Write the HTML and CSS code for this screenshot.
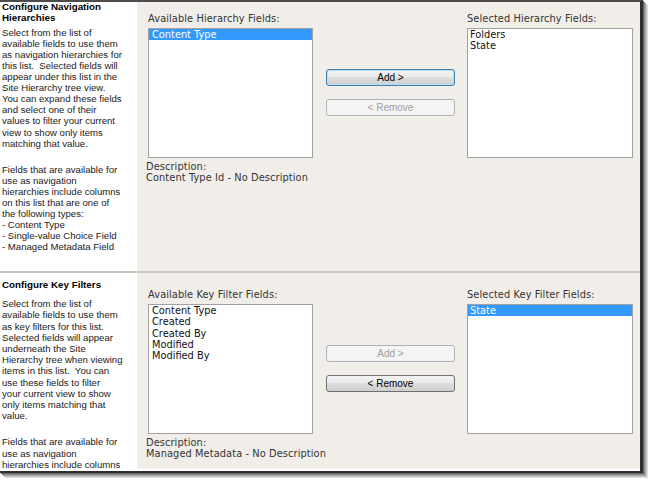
FILE: index.html
```html
<!DOCTYPE html>
<html lang="en">
<head>
  <meta charset="UTF-8">
  <title>Site Hierarchy Settings</title>
  <link rel="stylesheet" href="styles.css">
</head>
<body>
<div class="frame">
  <div class="page">
    <div class="row row-nav">
      <div class="info">
        <h3>Configure Navigation<br>Hierarchies</h3>
        <p>Select from the list of<br>available fields to use them<br>as navigation hierarchies for<br>this list.&nbsp; Selected fields will<br>appear under this list in the<br>Site Hierarchy tree view.<br>You can expand these fields<br>and select one of their<br>values to filter your current<br>view to show only items<br>matching that value.</p>
        <p>Fields that are available for<br>use as navigation<br>hierarchies include columns<br>on this list that are one of<br>the following types:<br>- Content Type<br>- Single-value Choice Field<br>- Managed Metadata Field</p>
      </div>
      <div class="panel">
        <div class="picker">
          <div class="col">
            <div class="label">Available Hierarchy Fields:</div>
            <ul class="list">
              <li class="is-selected">Content Type</li>
            </ul>
            <div class="desc">Description:<br>Content Type Id - No Description</div>
          </div>
          <div class="buttons">
            <button class="btn is-default">Add &gt;</button>
            <button class="btn" disabled>&lt; Remove</button>
          </div>
          <div class="col col-right">
            <div class="label">Selected Hierarchy Fields:</div>
            <ul class="list">
              <li>Folders</li>
              <li>State</li>
            </ul>
          </div>
        </div>
      </div>
    </div>
    <div class="row row-keys">
      <div class="info">
        <h3>Configure Key Filters</h3>
        <p>Select from the list of<br>available fields to use them<br>as key filters for this list.<br>Selected fields will appear<br>underneath the Site<br>Hierarchy tree when viewing<br>items in this list.&nbsp; You can<br>use these fields to filter<br>your current view to show<br>only items matching that<br>value.</p>
        <p>Fields that are available for<br>use as navigation<br>hierarchies include columns<br>on this list that are one of</p>
      </div>
      <div class="panel">
        <div class="picker">
          <div class="col">
            <div class="label">Available Key Filter Fields:</div>
            <ul class="list">
              <li>Content Type</li>
              <li>Created</li>
              <li>Created By</li>
              <li>Modified</li>
              <li>Modified By</li>
            </ul>
            <div class="desc">Description:<br>Managed Metadata - No Description</div>
          </div>
          <div class="buttons">
            <button class="btn" disabled>Add &gt;</button>
            <button class="btn">&lt; Remove</button>
          </div>
          <div class="col col-right">
            <div class="label">Selected Key Filter Fields:</div>
            <ul class="list">
              <li class="is-selected">State</li>
            </ul>
          </div>
        </div>
      </div>
    </div>
  </div>
</div>
</body>
</html>
```

FILE: styles.css
```css
*{ margin: 0; padding: 0; box-sizing: border-box;}
body{ background: #fff; color: #111; font-family: "Liberation Sans",Arial,sans-serif;}
ul,li{ list-style: none;}

.frame{ width: 648px; height: 480px; overflow: hidden;}
.page{ width: 643px; height: 473px; overflow: hidden; border-top: 2px solid #4c4c4c; border-right: 3px solid #2e2e2e; border-bottom: 2px solid #2e2e2e;
  box-shadow: 1px 1px 0 #666, 2px 2px 0 #8a8a8a, 3px 3px 0 #a8a8a8, 4px 4px 0 #c4c4c4, 5px 5px 0 #dcdcdc;}

.row{ display: flex;}
.row-nav{ height: 269px;}
.row-keys{ height: 198px; border-top: 2px solid #c9c7c3;}

.info{ width: 137px; padding-left: 2px; background: #fff; font-size: 9.6px; line-height: 11.1px; white-space: nowrap; overflow: hidden; color: #1a1a1a;}
.info h3{ font-size: 9.8px; font-weight: bold; line-height: 11.1px; color: #000;}
.info p{ margin-bottom: 15px;}
.row-nav .info h3{ margin-top: -1px; margin-bottom: 3.5px;}
.row-keys .info{ padding-top: 6px;}
.row-keys .info h3{ margin-bottom: 8px;}
.row-keys .info p{ line-height: 11.2px;}

.panel{ flex: 1; background: #f1eee9; padding-left: 11px;}
.row-nav .panel{ padding-top: 11px;}
.row-keys .panel{ padding-top: 16px;}
.picker{ display: flex; align-items: flex-start;}

.col{ width: 165px; font-family: "DejaVu Sans",Verdana,sans-serif; font-size: 9.8px; color: #222;}
.col-right{ width: 166px; margin-left: 12px;}
.label{ line-height: 12px; margin-bottom: 3px; color: #333; letter-spacing: 0.1px;}
.list{ height: 130px; border: 1px solid #a2a2a2; background: #fff; line-height: 11.3px; color: #111;}
.list li{ padding-left: 3px; white-space: nowrap;}
.col-right .list li{ padding-left: 2px;}
.list li.is-selected{ background: #3399ff; color: #fff;}
.desc{ margin: 3px 0 0 -2px; line-height: 11.3px; color: #333; white-space: nowrap; letter-spacing: 0.1px;}

.buttons{ width: 129px; margin: 56px 0 0 13px; display: flex; flex-direction: column; gap: 13px;}
.btn{ height: 17px; border: 1px solid #707070; border-radius: 3px; background: linear-gradient(#f2f2f2, #ebebeb 45%, #dddddd 50%, #cfcfcf); font-family: "Liberation Sans",Arial,sans-serif; font-size: 10px; color: #000;}
.btn.is-default{ border-color: #3c7fb1; box-shadow: inset 0 0 0 1px #b8e0f5;}
.btn:disabled{ border-color: #adb2b5; background: #f4f4f4; color: #a0a0a0;}
```
